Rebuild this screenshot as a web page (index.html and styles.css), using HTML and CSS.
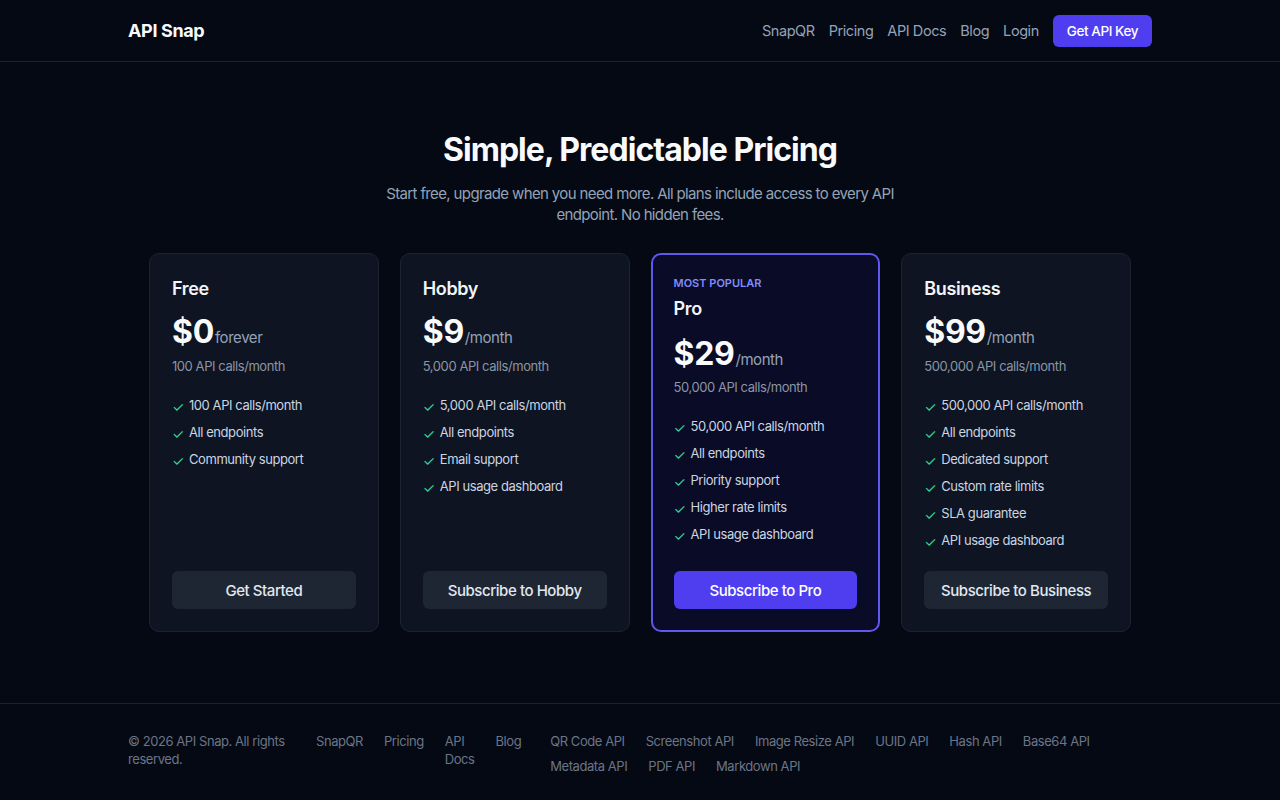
FILE: index.html
```html
<!DOCTYPE html>
<html lang="en">
<head>
<meta charset="utf-8">
<title>Pricing - API Snap</title>
<link rel="stylesheet" href="styles.css">
</head>
<body>
<header class="site-header">
  <div class="container header-inner">
    <a class="logo" href="#">API Snap</a>
    <nav class="main-nav">
      <a href="#">SnapQR</a>
      <a href="#">Pricing</a>
      <a href="#">API Docs</a>
      <a href="#">Blog</a>
      <a href="#">Login</a>
      <a href="#" class="btn-key">Get API Key</a>
    </nav>
  </div>
</header>

<main class="pricing">
  <h1>Simple, Predictable Pricing</h1>
  <p class="lead">Start free, upgrade when you need more. All plans include access to every API endpoint. No hidden fees.</p>

  <div class="plans">
    <div class="plan">
      <h2 class="plan-name">Free</h2>
      <div class="price"><span class="amount">$0</span><span class="period">forever</span></div>
      <p class="quota">100 API calls/month</p>
      <ul class="features">
        <li><span class="check">✓</span>100 API calls/month</li>
        <li><span class="check">✓</span>All endpoints</li>
        <li><span class="check">✓</span>Community support</li>
      </ul>
      <a href="#" class="plan-btn">Get Started</a>
    </div>

    <div class="plan">
      <h2 class="plan-name">Hobby</h2>
      <div class="price"><span class="amount">$9</span><span class="period">/month</span></div>
      <p class="quota">5,000 API calls/month</p>
      <ul class="features">
        <li><span class="check">✓</span>5,000 API calls/month</li>
        <li><span class="check">✓</span>All endpoints</li>
        <li><span class="check">✓</span>Email support</li>
        <li><span class="check">✓</span>API usage dashboard</li>
      </ul>
      <a href="#" class="plan-btn">Subscribe to Hobby</a>
    </div>

    <div class="plan plan-popular">
      <div class="badge">MOST POPULAR</div>
      <h2 class="plan-name">Pro</h2>
      <div class="price"><span class="amount">$29</span><span class="period">/month</span></div>
      <p class="quota">50,000 API calls/month</p>
      <ul class="features">
        <li><span class="check">✓</span>50,000 API calls/month</li>
        <li><span class="check">✓</span>All endpoints</li>
        <li><span class="check">✓</span>Priority support</li>
        <li><span class="check">✓</span>Higher rate limits</li>
        <li><span class="check">✓</span>API usage dashboard</li>
      </ul>
      <a href="#" class="plan-btn plan-btn-primary">Subscribe to Pro</a>
    </div>

    <div class="plan">
      <h2 class="plan-name">Business</h2>
      <div class="price"><span class="amount">$99</span><span class="period">/month</span></div>
      <p class="quota">500,000 API calls/month</p>
      <ul class="features">
        <li><span class="check">✓</span>500,000 API calls/month</li>
        <li><span class="check">✓</span>All endpoints</li>
        <li><span class="check">✓</span>Dedicated support</li>
        <li><span class="check">✓</span>Custom rate limits</li>
        <li><span class="check">✓</span>SLA guarantee</li>
        <li><span class="check">✓</span>API usage dashboard</li>
      </ul>
      <a href="#" class="plan-btn">Subscribe to Business</a>
    </div>
  </div>
</main>

<footer class="site-footer">
  <div class="container footer-inner">
    <p class="copyright">© 2026 API Snap. All rights reserved.</p>
    <nav class="footer-nav">
      <a href="#">SnapQR</a>
      <a href="#">Pricing</a>
      <a href="#">API Docs</a>
      <a href="#">Blog</a>
    </nav>
    <nav class="footer-apis">
      <a href="#">QR Code API</a>
      <a href="#">Screenshot API</a>
      <a href="#">Image Resize API</a>
      <a href="#">UUID API</a>
      <a href="#">Hash API</a>
      <a href="#">Base64 API</a>
      <a href="#">Metadata API</a>
      <a href="#">PDF API</a>
      <a href="#">Markdown API</a>
    </nav>
  </div>
</footer>
</body>
</html>
```

FILE: styles.css
```css
* { box-sizing: border-box; }

html, body {
  margin: 0;
  padding: 0;
}

body {
  background: #050913;
  color: #f1f5f9;
  font-family: Inter, "Noto Sans", "Liberation Sans", sans-serif;
  letter-spacing: -0.027em;
  -webkit-font-smoothing: antialiased;
}

a { text-decoration: none; color: inherit; }

.container {
  width: 1024px;
  margin: 0 auto;
}

/* Header */
.site-header {
  border-bottom: 1px solid #1a2130;
}

.header-inner {
  height: 61px;
  display: flex;
  align-items: center;
  justify-content: space-between;
}

.logo {
  font-size: 18px;
  font-weight: 700;
  color: #f8fafc;
  letter-spacing: -0.02em;
}

.main-nav {
  display: flex;
  align-items: center;
  gap: 14px;
  font-size: 14.5px;
  color: #94a3b8;
}

.btn-key {
  background: #4f3ef0;
  color: #ffffff;
  font-size: 13.5px;
  font-weight: 500;
  padding: 0 14px;
  height: 32px;
  display: flex;
  align-items: center;
  border-radius: 6px;
}

/* Pricing */
.pricing {
  padding-top: 69px;
  padding-bottom: 71px;
  text-align: center;
}

.pricing h1 {
  margin: 0;
  font-size: 32px;
  font-weight: 700;
  line-height: 38px;
  letter-spacing: -0.03em;
  color: #f8fafc;
}

.lead {
  margin: 14px auto 0;
  width: 530px;
  font-size: 15px;
  line-height: 21px;
  letter-spacing: -0.042em;
  color: #94a3b8;
}

.plans {
  width: 982px;
  margin: 28px auto 0;
  display: grid;
  grid-template-columns: repeat(4, 1fr);
  gap: 21px;
  text-align: left;
}

.plan {
  background: #0e1421;
  border: 1px solid #1c2434;
  border-radius: 10px;
  padding: 22px;
  min-height: 379px;
  display: flex;
  flex-direction: column;
}

.plan-popular {
  background: #0a0b26;
  border: 2px solid #6157ef;
  padding: 21px;
}

.badge {
  font-size: 11px;
  font-weight: 600;
  letter-spacing: 0;
  color: #818cf8;
  line-height: 14px;
  margin-bottom: 6px;
}

.plan-name {
  margin: 0;
  font-size: 18px;
  font-weight: 600;
  line-height: 26px;
  color: #f1f5f9;
  letter-spacing: -0.02em;
}

.price {
  margin-top: 10px;
  display: flex;
  align-items: baseline;
  line-height: 40px;
}

.plan-popular .price {
  margin-top: 12px;
}

.plan-popular .quota {
  margin-top: -2px;
}

.amount {
  font-size: 32px;
  font-weight: 700;
  color: #f8fafc;
  letter-spacing: -0.01em;
}

.period {
  font-size: 15px;
  color: #94a3b8;
  margin-left: 1px;
}

.quota {
  margin: -1px 0 0;
  font-size: 13px;
  line-height: 18px;
  color: #8b95a5;
}

.features {
  list-style: none;
  margin: 21px 0 0;
  padding: 0;
  display: flex;
  flex-direction: column;
  gap: 9px;
}

.features li {
  display: flex;
  align-items: center;
  font-size: 13px;
  line-height: 18px;
  color: #cbd5e1;
}

.check {
  color: #34d399;
  font-size: 14px;
  width: 17px;
  flex-shrink: 0;
  position: relative;
  top: 2px;
  letter-spacing: 0;
}

.plan-btn {
  margin-top: auto;
  height: 38px;
  display: flex;
  align-items: center;
  justify-content: center;
  background: #1e2634;
  color: #e2e8f0;
  border-radius: 6px;
  font-size: 15px;
  font-weight: 500;
}

.plan-btn-primary {
  background: #4f3ef0;
  color: #ffffff;
}

/* Footer */
.site-footer {
  border-top: 1px solid #1a2130;
  padding: 28px 0 30px;
}

.footer-inner {
  display: flex;
  align-items: flex-start;
  font-size: 13px;
  line-height: 18px;
  color: #6b7588;
}

.copyright {
  margin: 0;
  width: 188px;
  flex-shrink: 0;
  padding-right: 28px;
}

.footer-nav {
  display: flex;
  gap: 21px;
  flex-shrink: 0;
}

.footer-nav a {
  width: min-content;
}

.footer-apis {
  margin-left: 29px;
  flex: 1;
  display: flex;
  flex-wrap: wrap;
  column-gap: 21px;
  row-gap: 7px;
}
```
